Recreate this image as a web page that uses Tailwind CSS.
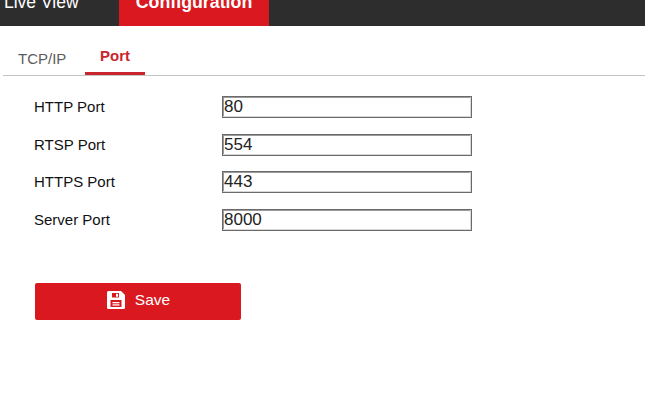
<!DOCTYPE html>
<html lang="en">
<head>
  <meta charset="UTF-8" />
  <title>Port</title>
  <script src="https://cdn.jsdelivr.net/npm/@tailwindcss/browser@4"></script>
</head>
<body class="bg-white overflow-hidden font-['Liberation_Sans',Arial,sans-serif]">

  <!-- Top nav -->
  <div class="h-[26px] bg-[#2d2d2d] flex items-end overflow-hidden text-white">
    <div class="w-[119px] h-[26px] pl-[4px] text-[17.5px] leading-[18px] flex items-end pb-[15px]">Live View</div>
    <div class="w-[150px] h-[26px] bg-[#d9181f] text-[17.8px] font-bold flex justify-center items-end pb-[15px] leading-[18px]">Configuration</div>
  </div>

  <!-- Tabs -->
  <div class="h-[50px] border-b border-[#c4c4c4] ml-[3px] flex items-end">
    <div class="w-[82px] h-[49px] pl-[15px] pt-[24px] text-[15px] leading-[18px] text-[#5c5c5c]">TCP/IP</div>
    <div class="w-[60px] h-[49px] pt-[21px] text-center text-[15px] leading-[18px] font-bold text-[#c9252d] border-b-[3px] border-[#c9252d]">Port</div>
  </div>

  <!-- Form -->
  <div class="pl-[34px] pt-[20px] flex flex-col gap-[16px]">
    <div class="h-[22px] flex items-center">
      <label class="w-[188px] text-[15px] text-[#111]">HTTP Port</label>
      <input class="w-[250px] h-[22px] border border-[#6a6a6a] shadow-[inset_-1px_-1px_0_#d8d8d8,inset_1px_1px_0_#9a9a9a] pl-[1px] text-[17px] text-[#222]" value="80" />
    </div>
    <div class="h-[22px] flex items-center">
      <label class="w-[188px] text-[15px] text-[#111]">RTSP Port</label>
      <input class="w-[250px] h-[22px] border border-[#6a6a6a] shadow-[inset_-1px_-1px_0_#d8d8d8,inset_1px_1px_0_#9a9a9a] pl-[1px] text-[17px] text-[#222]" value="554" />
    </div>
    <div class="h-[22px] flex items-center -mt-px">
      <label class="w-[188px] text-[15px] text-[#111]">HTTPS Port</label>
      <input class="w-[250px] h-[22px] border border-[#6a6a6a] shadow-[inset_-1px_-1px_0_#d8d8d8,inset_1px_1px_0_#9a9a9a] pl-[1px] text-[17px] text-[#222]" value="443" />
    </div>
    <div class="h-[22px] flex items-center">
      <label class="w-[188px] text-[15px] text-[#111]">Server Port</label>
      <input class="w-[250px] h-[22px] border border-[#6a6a6a] shadow-[inset_-1px_-1px_0_#d8d8d8,inset_1px_1px_0_#9a9a9a] pl-[1px] text-[17px] text-[#222]" value="8000" />
    </div>
  </div>

  <!-- Save -->
  <button class="ml-[35px] mt-[52px] w-[206px] h-[37px] bg-[#d9181f] rounded-[2px] text-white text-[15.5px] flex items-center justify-center gap-[10px] pb-[2px]">
    <svg class="ml-[1px] -mt-[2px]" width="18" height="18" viewBox="0 0 18 18" fill="none">
      <path fill-rule="evenodd" fill="#fff" d="M1.500 0H14L18 4V16.500A1.500 1.500 0 0 1 16.500 18H1.500A1.500 1.500 0 0 1 0 16.500V1.500A1.500 1.500 0 0 1 1.500 0ZM5 2V6.500H12V2ZM9 2.800H11V5.700H9ZM3.500 9V16H14.500V9Z"/>
      <rect x="5.500" y="11" width="7" height="1.300" fill="#fff"/>
      <rect x="5.500" y="13.300" width="7" height="1.300" fill="#fff"/>
    </svg>
    <span class="-mt-[2px]">Save</span>
  </button>

</body>
</html>
